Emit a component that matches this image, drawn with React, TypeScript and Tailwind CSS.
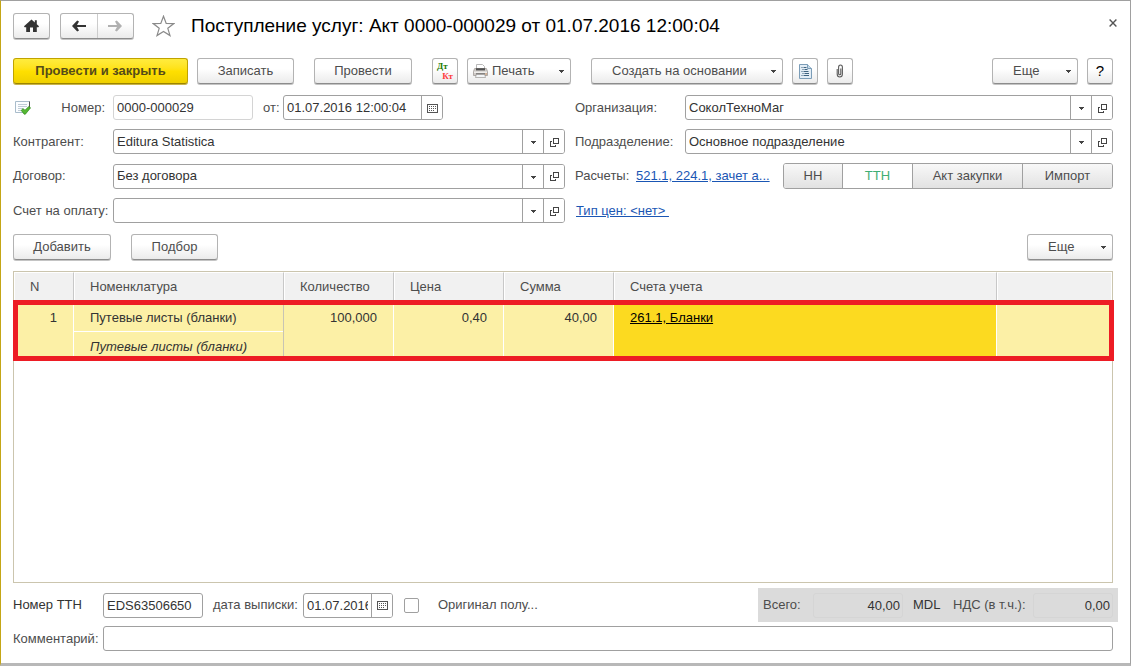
import React, { useState } from 'react';
import clsx from 'clsx';

const FONT = "font-['Liberation_Sans',Arial,sans-serif]";

const btnBase =
  'h-[26px] shrink-0 rounded-[3px] border border-[#b3b3b3] border-b-[#8c8c8c] bg-linear-to-b from-white from-40% to-[#ebebeb] text-[#4d4d4d] shadow-[0_1px_0_#c4c4c4]';
const fieldBox = 'flex h-[25px] overflow-hidden rounded-[3px] border border-[#a0a0a0] bg-white';
const fieldInput = 'h-full min-w-0 flex-1 bg-transparent px-[3px] text-[#333] outline-none';
const fieldBtn =
  'flex h-full w-[21px] shrink-0 items-center justify-center border-l border-[#a0a0a0] bg-white pt-px pl-px';

/* ---------- Icons ---------- */

const ArrowDown = () => (
  <svg width="5" height="3" viewBox="0 0 5 3" className="shrink-0" aria-hidden="true">
    <path d="M0 0h5v1H4v1H3v1H2V2H1V1H0z" fill="#444" />
  </svg>
);

const OpenIcon = () => (
  <svg width="9" height="9" viewBox="0 0 9 9" shapeRendering="crispEdges" aria-hidden="true">
    <path d="M3.5.5h5v5h-5z" fill="none" stroke="#444" />
    <path d="M2 3.5H.5v5h5V7" fill="none" stroke="#444" />
  </svg>
);

const CalendarIcon = () => (
  <svg width="11" height="9" viewBox="0 0 11 9" shapeRendering="crispEdges" aria-hidden="true">
    <rect x="0.5" y="0.5" width="10" height="8" fill="none" stroke="#555" />
    <path d="M2 2.5h7M2 4.5h7M2 6.5h5" stroke="#555" strokeDasharray="1 1" />
  </svg>
);

const HomeIcon = () => (
  <svg width="15" height="14" viewBox="0 0 15 14" aria-hidden="true">
    <path
      d="M7.5.4 10.8 3.4V1.2h2v4L15 7.3l-.6.9h-1.6v4.9H9V8.6H6v4.5H2.2V8.2H.6L0 7.3z"
      fill="#333"
    />
  </svg>
);

const ArrowIcon = ({ color, flip }: { color: string; flip?: boolean }) => (
  <svg
    width="14"
    height="12"
    viewBox="0 0 14 12"
    className={clsx(flip && 'rotate-180')}
    aria-hidden="true"
  >
    <path d="M0 6 5.2.4 7 1.6 5 4.9H14v2.2H5l2 3.3-1.8 1.2z" fill={color} />
  </svg>
);

const StarIcon = () => (
  <svg width="23" height="22" viewBox="0 0 23 22" aria-hidden="true">
    <path
      d="M11.5 1.2 14.2 8.4 21.9 8.6 15.8 13.3 18 20.6 11.5 16.4 5 20.6 7.2 13.3 1.1 8.6 8.8 8.4z"
      fill="#fff"
      stroke="#8a8a8a"
      strokeWidth="1.2"
    />
  </svg>
);

const PostedIcon = () => (
  <svg width="16" height="14" viewBox="0 0 16 14" aria-hidden="true">
    <path d="M.5.5h14v7l-4 4H.5z" fill="#fbfdff" stroke="#a9bccb" />
    <path d="M14.5.5v6" stroke="#555" />
    <path d="M3 3.5h9M3 5.5h9M3 7.5h5M3 9.5h4" stroke="#c0ccd6" />
    <path
      d="M6.2 9.4 8 7.6l2 1.6 3.8-3.7 1.8 1.3-5.2 6.4H9.2z"
      fill="#55b832"
      stroke="#2f8a1c"
      strokeWidth=".7"
    />
  </svg>
);

const PrinterIcon = () => (
  <svg width="15" height="14" viewBox="0 0 15 14" aria-hidden="true">
    <path d="M3.5.5h6l2 2V6h-8z" fill="#fff" stroke="#b8b8b8" />
    <path d="M1.6 4.5h11.8l1.1 3v4H.5v-4z" fill="#cfcbc8" stroke="#a29c98" strokeWidth=".8" />
    <path d="M3 4.2h9v2.2H3z" fill="#505050" />
    <path d="M1 7.6h13v1.4H1z" fill="#f0eeec" />
    <path d="M3 9.4h9v1H3z" fill="#555" />
    <path d="M3.3 10.4h8.4l.8 3.1H2.5z" fill="#f3f5f7" stroke="#8f8986" strokeWidth=".6" />
    <path d="M12.4 9.4h1.4v1h-1.4z" fill="#d98b4a" />
  </svg>
);

const DocumentIcon = () => (
  <svg width="13" height="15" viewBox="0 0 13 15" aria-hidden="true">
    <path d="M.5.5h8l4 4v10H.5z" fill="#e3edf5" stroke="#7b9db8" />
    <path d="M8.5.5v4h4" fill="#c4d9e8" stroke="#7b9db8" />
    <path
      d="M2.5 3.5h1M4.5 3.5h3M3.5 5.5h1M5.5 5.5h3M2.5 7.5h1M4.5 7.5h5M3.5 9.5h1M5.5 9.5h4.5M2.5 11.5h1M4.5 11.5h5.5"
      stroke="#3e6380"
    />
  </svg>
);

const ClipIcon = () => (
  <svg width="8" height="14" viewBox="0 0 8 14" aria-hidden="true">
    <path
      d="M1.2 5v5a2.6 3 0 0 0 5.2 0V3.2a1.9 2.2 0 0 0-3.8 0v6.3a1.1 1.3 0 0 0 2.2 0V4.6"
      fill="none"
      stroke="#5c5c5c"
      strokeWidth="1.1"
    />
  </svg>
);

const CloseIcon = () => (
  <svg width="8" height="8" viewBox="0 0 8 8" aria-hidden="true">
    <path d="m.6.6 6.8 6.8M7.4.6.6 7.4" stroke="#555" strokeWidth="1.4" />
  </svg>
);

/* ---------- Controls ---------- */

interface ComboFieldProps {
  id: string;
  label: string;
  value: string;
  labelClass: string;
}

const ComboField: React.FC<ComboFieldProps> = ({ id, label, value, labelClass }) => (
  <div className="flex min-w-0 items-center">
    <label htmlFor={id} className={clsx('shrink-0 whitespace-nowrap', labelClass)}>
      {label}
    </label>
    <div className={clsx(fieldBox, 'min-w-0 flex-1')}>
      <div className="relative h-full min-w-0 flex-1">
        <select
          id={id}
          defaultValue={value}
          className="h-full w-full appearance-none bg-transparent pr-6 pl-[3px] text-[#333] outline-none"
        >
          <option value={value}>{value}</option>
        </select>
        <span className="pointer-events-none absolute inset-y-0 right-0 flex w-[21px] items-center justify-center border-l border-[#a0a0a0] pt-0.5">
          <ArrowDown />
        </span>
      </div>
      <button type="button" aria-label="Открыть" className={fieldBtn}>
        <OpenIcon />
      </button>
    </div>
  </div>
);

interface DateFieldProps {
  id: string;
  value: string;
  className: string;
}

const DateField: React.FC<DateFieldProps> = ({ id, value, className }) => (
  <div className={clsx(fieldBox, className)}>
    <input id={id} defaultValue={value} className={fieldInput} />
    <button type="button" aria-label="Календарь" className={fieldBtn}>
      <CalendarIcon />
    </button>
  </div>
);

const MoreButton = () => (
  <button
    type="button"
    aria-haspopup="menu"
    className={clsx(btnBase, 'flex w-[86px] items-center justify-between pr-1.5 pl-5')}
  >
    Еще
    <ArrowDown />
  </button>
);

/* ---------- Data ---------- */

const documentTabs = [
  { title: 'НН', width: 'w-[59px]' },
  { title: 'ТТН', width: 'w-[70px]' },
  { title: 'Акт закупки', width: 'w-[110px]' },
  { title: 'Импорт', width: 'w-[89px]' },
];

const columns = [
  { title: 'N', width: 'w-[60px]' },
  { title: 'Номенклатура', width: 'w-[210px]' },
  { title: 'Количество', width: 'w-[110px]' },
  { title: 'Цена', width: 'w-[110px]' },
  { title: 'Сумма', width: 'w-[110px]' },
  { title: 'Счета учета', width: '' },
  { title: '', width: 'w-[115px]' },
];

const rows = [
  {
    id: 1,
    name: 'Путевые листы (бланки)',
    description: 'Путевые листы (бланки)',
    quantity: '100,000',
    price: '0,40',
    total: '40,00',
    account: '261.1, Бланки',
  },
];

const App: React.FC = () => {
  const [activeTab, setActiveTab] = useState<string>('ТТН');
  const [original, setOriginal] = useState<boolean>(false);

  return (
    <div
      className={clsx(
        FONT,
        'flex min-h-screen flex-col border-t border-r border-b-3 border-l border-t-[#a0a0a0] border-r-[#a0a0a0] border-b-[#b8b8b8] border-l-[#c4a616] bg-white pt-3 pr-[17px] pb-3 pl-3 text-[13px] leading-4 text-[#4d4d4d]'
      )}
    >
      {/* Title bar */}
      <header className="flex items-center">
        <button
          type="button"
          aria-label="Начальная страница"
          className={clsx(btnBase, 'flex w-[37px] items-center justify-center')}
        >
          <HomeIcon />
        </button>
        <div className={clsx(btnBase, 'ml-2.5 flex w-[74px]')}>
          <button type="button" aria-label="Назад" className="flex flex-1 items-center justify-center">
            <ArrowIcon color="#333" />
          </button>
          <button
            type="button"
            aria-label="Вперед"
            className="flex flex-1 items-center justify-center border-l border-[#ccc]"
          >
            <ArrowIcon color="#b0b0b0" flip />
          </button>
        </div>
        <button type="button" aria-label="В избранное" className="ml-[18px] shrink-0">
          <StarIcon />
        </button>
        <h1 className="ml-4 text-[19px] leading-6 text-black">
          Поступление услуг: Акт 0000-000029 от 01.07.2016 12:00:04
        </h1>
        <button type="button" aria-label="Закрыть" className="-mr-2 mb-1.5 ml-auto p-1">
          <CloseIcon />
        </button>
      </header>

      {/* Command bar */}
      <div className="mt-[19px] flex items-center">
        <button
          type="button"
          className="h-[26px] w-[175px] shrink-0 rounded-[3px] border border-[#c0a300] border-b-[#9c8500] bg-linear-to-b from-[#ffec3d] via-[#ffe000] to-[#efd000] font-bold text-[#554b1a] shadow-[0_1px_0_#c9b44a]"
        >
          Провести и закрыть
        </button>
        <button type="button" className={clsx(btnBase, 'ml-[9px] w-[97px]')}>
          Записать
        </button>
        <button type="button" className={clsx(btnBase, 'ml-5 w-[98px]')}>
          Провести
        </button>
        <button
          type="button"
          className={clsx(
            btnBase,
            "ml-5 flex w-[26px] flex-col justify-center px-1 font-['Liberation_Serif',serif] text-[9px] leading-[10px] font-bold"
          )}
        >
          <span className="self-start text-[#1d7a00]">Дт</span>
          <span className="self-end text-[#ff3c3c]">Кт</span>
        </button>
        <button
          type="button"
          aria-haspopup="menu"
          className={clsx(btnBase, 'ml-[9px] flex w-[104px] items-center pr-1.5 pl-[5px]')}
        >
          <PrinterIcon />
          <span className="ml-1 flex-1 text-left">Печать</span>
          <ArrowDown />
        </button>
        <button
          type="button"
          aria-haspopup="menu"
          className={clsx(btnBase, 'ml-5 flex w-[192px] items-center justify-between pr-1.5 pl-5')}
        >
          Создать на основании
          <ArrowDown />
        </button>
        <button
          type="button"
          aria-label="Структура подчиненности"
          className={clsx(btnBase, 'ml-[9px] flex w-[26px] items-center justify-center')}
        >
          <DocumentIcon />
        </button>
        <button
          type="button"
          aria-label="Файлы"
          className={clsx(btnBase, 'ml-[9px] flex w-[26px] items-center justify-center')}
        >
          <ClipIcon />
        </button>
        <div className="ml-auto flex gap-[9px]">
          <MoreButton />
          <button type="button" aria-label="Справка" className={clsx(btnBase, 'w-[26px] text-[15px] text-black')}>
            ?
          </button>
        </div>
      </div>

      {/* Document fields */}
      <div className="mt-[11px] grid grid-cols-[minmax(0,552fr)_minmax(0,538fr)] items-center gap-x-2.5 gap-y-[9px]">
        <div className="flex items-center">
          <div className="flex w-[100px] shrink-0 items-center justify-between pr-2 pl-0.5">
            <PostedIcon />
            <label htmlFor="number">Номер:</label>
          </div>
          <input
            id="number"
            defaultValue="0000-000029"
            className="h-[25px] w-[140px] rounded-[3px] border border-[#d4d4d4] px-[3px] text-[#333] outline-none"
          />
          <label htmlFor="date" className="ml-2.5 w-5 shrink-0">
            от:
          </label>
          <DateField id="date" value="01.07.2016 12:00:04" className="w-[160px]" />
        </div>
        <ComboField id="organization" label="Организация:" value="СоколТехноМаг" labelClass="w-[110px]" />

        <ComboField id="contractor" label="Контрагент:" value="Editura Statistica" labelClass="w-[100px]" />
        <ComboField
          id="department"
          label="Подразделение:"
          value="Основное подразделение"
          labelClass="w-[110px]"
        />

        <ComboField id="contract" label="Договор:" value="Без договора" labelClass="w-[100px]" />
        <div className="flex items-center whitespace-nowrap">
          <span className="w-[61px] shrink-0">Расчеты:</span>
          <a href="#settlements" className="text-[#1a56b4] underline">
            521.1, 224.1, зачет а...
          </a>
          <div className="ml-auto flex h-[26px] shrink-0 overflow-hidden rounded-[3px] border border-[#a0a0a0]">
            {documentTabs.map((tab) => (
              <button
                key={tab.title}
                type="button"
                aria-pressed={activeTab === tab.title}
                onClick={() => setActiveTab(tab.title)}
                className={clsx(
                  'border-r border-[#a0a0a0] last:border-r-0',
                  tab.width,
                  activeTab === tab.title
                    ? 'bg-white text-[#3fae74]'
                    : 'bg-linear-to-b from-[#f8f8f8] to-[#e2e2e2]'
                )}
              >
                {tab.title}
              </button>
            ))}
          </div>
        </div>

        <ComboField id="invoice" label="Счет на оплату:" value="" labelClass="w-[100px]" />
        <div>
          <a href="#price-type" className="ml-px whitespace-pre text-[#1a56b4] underline">
            {'Тип цен: <нет> '}
          </a>
        </div>
      </div>

      {/* Table commands */}
      <div className="mt-[11px] flex items-center">
        <button type="button" className={clsx(btnBase, 'w-[98px]')}>
          Добавить
        </button>
        <button type="button" className={clsx(btnBase, 'ml-5 w-[87px]')}>
          Подбор
        </button>
        <div className="ml-auto">
          <MoreButton />
        </div>
      </div>

      {/* Services table */}
      <div className="mt-[11px] flex-1 border border-[#cbc5ae]">
        <table className="w-full table-fixed border-separate border-spacing-0">
          <thead>
            <tr className="h-[29px]">
              {columns.map((column) => (
                <th
                  key={column.title}
                  className={clsx(
                    'border-t border-r border-l border-t-white border-r-[#c8c8c8] border-l-white bg-[#f1f1f1] pl-[15px] text-left font-normal last:border-r-white',
                    column.width
                  )}
                >
                  {column.title}
                </th>
              ))}
            </tr>
          </thead>
          <tbody>
            {rows.map((row) => (
              <tr key={row.id} className="relative bg-[#fcf0a6] align-top text-[#333]">
                <td className="border-r border-white pt-[9px] pr-4 text-right">
                  {row.id}
                  {/* Selection frame around the whole row */}
                  <span className="pointer-events-none absolute -inset-y-px -right-0.5 -left-px border-5 border-[#ed1c24]" />
                </td>
                <td className="border-r border-[#c8c4b4] p-0">
                  <div className="h-[31px] border-b border-white pt-[9px] pl-4">{row.name}</div>
                  <div className="h-7 pt-[7px] pl-4 italic">{row.description}</div>
                </td>
                <td className="border-r border-white pt-[9px] pr-4 text-right">{row.quantity}</td>
                <td className="border-r border-white pt-[9px] pr-4 text-right">{row.price}</td>
                <td className="border-r border-white pt-[9px] pr-4 text-right">{row.total}</td>
                <td className="border-r border-white bg-[#fcda20] pt-[9px] pl-4">
                  <a href="#account" className="text-black underline">
                    {row.account}
                  </a>
                </td>
                <td />
              </tr>
            ))}
          </tbody>
        </table>
      </div>

      {/* Footer */}
      <footer className="mt-[5px]">
        <div className="flex items-center">
          <label htmlFor="ttn-number" className="w-[90px] shrink-0 text-[#333]">
            Номер ТТН
          </label>
          <input
            id="ttn-number"
            defaultValue="EDS63506650"
            className="h-[25px] w-[100px] rounded-[3px] border border-[#a0a0a0] px-[3px] text-[#333] outline-none"
          />
          <label htmlFor="ttn-date" className="ml-2.5 w-[90px] shrink-0">
            дата выписки:
          </label>
          <DateField id="ttn-date" value="01.07.2016" className="w-[90px]" />
          <input
            id="original"
            type="checkbox"
            checked={original}
            onChange={(e) => setOriginal(e.target.checked)}
            className="ml-[11px] size-[15px] shrink-0 appearance-none rounded-[2px] border border-[#a0a0a0] bg-white checked:bg-[#ffe000]"
          />
          <label htmlFor="original" className="ml-[19px]">
            Оригинал полу...
          </label>
          <div className="-mr-[5px] ml-auto flex h-[34px] items-center bg-[#dbdbdb] px-[5px]">
            <label htmlFor="sum-total" className="w-[50px]">
              Всего:
            </label>
            <input
              id="sum-total"
              readOnly
              value="40,00"
              className="h-[25px] w-[90px] rounded-[3px] border border-[#d5d5d5] px-0.5 text-right text-[#333] outline-none"
            />
            <span className="ml-2.5 w-10 text-[#333]">MDL</span>
            <label htmlFor="sum-vat" className="w-20">
              НДС (в т.ч.):
            </label>
            <input
              id="sum-vat"
              readOnly
              value="0,00"
              className="h-[25px] w-20 rounded-[3px] border border-[#d5d5d5] px-0.5 text-right text-[#333] outline-none"
            />
          </div>
        </div>
        <div className="mt-1 flex items-center">
          <label htmlFor="comment" className="w-[90px] shrink-0">
            Комментарий:
          </label>
          <input
            id="comment"
            className="h-[25px] min-w-0 flex-1 rounded-[3px] border border-[#a0a0a0] px-[3px] text-[#333] outline-none"
          />
        </div>
      </footer>
    </div>
  );
};

export default App;
